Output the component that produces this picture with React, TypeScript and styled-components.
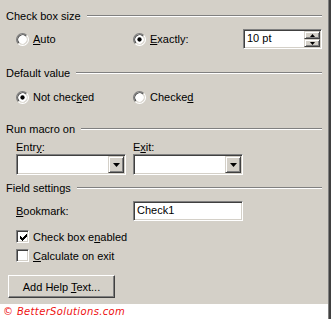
import React from "react";
import styled, { createGlobalStyle } from "styled-components";

const GlobalStyle = createGlobalStyle`
  html, body {
    margin: 0;
    padding: 0;
    background: #ffffff;
  }
  body {
    font-family: "Liberation Sans", Arial, sans-serif;
    font-size: 11px;
    color: #000000;
  }
`;

const FACE = "#d4d0c8";
const SHADOW = "#808080";
const DARK = "#404040";

const Frame = styled.div`
  display: flex;
  width: 331px;
  height: 319px;
  overflow: hidden;
`;

const Main = styled.div`
  flex: 1;
  display: flex;
  flex-direction: column;
`;

const Edge = styled.div`
  width: 3px;
  box-sizing: border-box;
  border-left: 1px solid ${SHADOW};
  background: ${DARK};
`;

const Panel = styled.div`
  height: 304px;
  box-sizing: border-box;
  padding: 9px 6px 0 6px;
  background: ${FACE};
  display: flex;
  flex-direction: column;
`;

const Watermark = styled.div`
  flex: 1;
  display: flex;
  align-items: center;
  padding-left: 3px;
  background: #ffffff;
  color: #ee1111;
  font-family: "DejaVu Sans", Verdana, sans-serif;
  font-style: italic;
  font-size: 10px;
  letter-spacing: 0.35px;
`;

const Legend = styled.div<{ $top?: number }>`
  display: flex;
  align-items: center;
  gap: 6px;
  height: 14px;
  line-height: 14px;
  margin-top: ${(p) => p.$top ?? 0}px;
  white-space: nowrap;
`;

const Rule = styled.div`
  flex: 1;
  height: 0;
  border-top: 1px solid ${SHADOW};
  border-bottom: 1px solid #ffffff;
`;

const Grid = styled.div<{ $top: number; $rows?: string }>`
  display: grid;
  grid-template-columns: 117px 110px 79px;
  grid-template-rows: ${(p) => p.$rows ?? "auto"};
  align-items: center;
  margin: ${(p) => p.$top}px 0 0 10px;
`;

const Option = styled.label`
  display: flex;
  align-items: center;
  gap: 4px;
  height: 14px;
  line-height: 14px;
  white-space: nowrap;
`;

const FieldLabel = styled.div`
  height: 14px;
  line-height: 14px;
  white-space: nowrap;
`;

const Sunken = styled.div<{ $w: number; $h: number }>`
  width: ${(p) => p.$w}px;
  height: ${(p) => p.$h}px;
  box-sizing: border-box;
  display: flex;
  align-items: stretch;
  background: #ffffff;
  border: 1px solid;
  border-color: ${SHADOW} #ffffff #ffffff ${SHADOW};
  box-shadow: inset 1px 1px 0 ${DARK}, inset -1px -1px 0 ${FACE};
  padding: 1px;
`;

const FieldText = styled.div`
  flex: 1;
  padding-left: 2px;
  line-height: 15px;
  white-space: nowrap;
`;

const Raised = styled.div`
  box-sizing: border-box;
  background: ${FACE};
  border: 1px solid;
  border-color: ${FACE} ${DARK} ${DARK} ${FACE};
  box-shadow: inset 1px 1px 0 #ffffff, inset -1px -1px 0 ${SHADOW};
  display: flex;
  align-items: center;
  justify-content: center;
`;

const DropButton = styled(Raised)`
  width: 16px;
`;

const SpinColumn = styled.div`
  width: 16px;
  display: flex;
  flex-direction: column;
`;

const SpinButton = styled(Raised)`
  flex: 1;
`;

const Check = styled.div<{ $top: number }>`
  display: flex;
  align-items: center;
  gap: 4px;
  height: 13px;
  margin: ${(p) => p.$top}px 0 0 10px;
  white-space: nowrap;
`;

const CheckBox = styled.div`
  width: 13px;
  height: 13px;
  box-sizing: border-box;
  background: #ffffff;
  border: 1px solid;
  border-color: ${SHADOW} #ffffff #ffffff ${SHADOW};
  box-shadow: inset 1px 1px 0 ${DARK}, inset -1px -1px 0 ${FACE};
  position: relative;
`;

const Tick = styled.svg`
  position: absolute;
  left: 2px;
  top: 2px;
`;

const PushButton = styled(Raised)`
  width: 107px;
  height: 23px;
  margin: 13px 0 0 2px;
  border-color: #ffffff ${DARK} ${DARK} #ffffff;
  box-shadow: inset -1px -1px 0 ${SHADOW};
  white-space: nowrap;
  font-size: 11px;
`;

const Radio: React.FC<{ checked?: boolean }> = ({ checked }) => (
  <svg width="13" height="13" viewBox="0 0 12 12" style={{ flex: "none" }}>
    <circle cx="6" cy="6" r="5" fill="#ffffff" />
    <path d="M2.11 9.89 A5.5 5.5 0 0 1 9.89 2.11" fill="none" stroke={SHADOW} strokeWidth="1" />
    <path d="M9.89 2.11 A5.5 5.5 0 0 1 2.11 9.89" fill="none" stroke="#ffffff" strokeWidth="1" />
    <path d="M2.82 9.18 A4.5 4.5 0 0 1 9.18 2.82" fill="none" stroke={DARK} strokeWidth="1" />
    <path d="M9.18 2.82 A4.5 4.5 0 0 1 2.82 9.18" fill="none" stroke={FACE} strokeWidth="1" />
    {checked && <circle cx="6" cy="6" r="2" fill="#000000" />}
  </svg>
);

const tickRows: [number, number][][] = [
  [[6, 1]],
  [[5, 2]],
  [[0, 1], [4, 3]],
  [[0, 2], [3, 3]],
  [[0, 5]],
  [[1, 3]],
  [[2, 1]],
];

const CheckMark = () => (
  <Tick width="9" height="9" viewBox="0 0 9 9" shapeRendering="crispEdges">
    {tickRows.map((row, y) =>
      row.map(([x, w]) => <rect key={`${y}-${x}`} x={x + 1} y={y + 1} width={w} height="1" fill="#000" />)
    )}
  </Tick>
);

const Arrow: React.FC<{ dir: "up" | "down"; size?: number }> = ({ dir, size = 7 }) => {
  const h = Math.ceil(size / 2);
  const pts =
    dir === "down" ? `0,0 ${size},0 ${size / 2},${h}` : `0,${h} ${size},${h} ${size / 2},0`;
  return (
    <svg width={size} height={h} viewBox={`0 0 ${size} ${h}`}>
      <polygon points={pts} fill="#000" />
    </svg>
  );
};

const Combo = () => (
  <Sunken $w={110} $h={21}>
    <FieldText />
    <DropButton>
      <Arrow dir="down" />
    </DropButton>
  </Sunken>
);

export default function App() {
  return (
    <>
      <GlobalStyle />
      <Frame>
        <Main>
          <Panel>
            <Legend>
              Check box size
              <Rule />
            </Legend>
            <Grid $top={6}>
              <Option>
                <Radio />
                <span>
                  <u>A</u>uto
                </span>
              </Option>
              <Option>
                <Radio checked />
                <span>
                  <u>E</u>xactly:
                </span>
              </Option>
              <Sunken $w={79} $h={20}>
                <FieldText>10 pt</FieldText>
                <SpinColumn>
                  <SpinButton>
                    <Arrow dir="up" size={5} />
                  </SpinButton>
                  <SpinButton>
                    <Arrow dir="down" size={5} />
                  </SpinButton>
                </SpinColumn>
              </Sunken>
            </Grid>

            <Legend $top={17}>
              Default value
              <Rule />
            </Legend>
            <Grid $top={10}>
              <Option>
                <Radio checked />
                <span>
                  Not chec<u>k</u>ed
                </span>
              </Option>
              <Option>
                <Radio />
                <span>
                  Checke<u>d</u>
                </span>
              </Option>
            </Grid>

            <Legend $top={18}>
              Run macro on
              <Rule />
            </Legend>
            <Grid $top={4} $rows="14px 21px">
              <FieldLabel>
                Entr<u>y</u>:
              </FieldLabel>
              <FieldLabel>
                E<u>x</u>it:
              </FieldLabel>
              <div />
              <Combo />
              <Combo />
            </Grid>

            <Legend $top={6}>
              Field settings
              <Rule />
            </Legend>
            <Grid $top={6}>
              <FieldLabel>
                <u>B</u>ookmark:
              </FieldLabel>
              <Sunken $w={110} $h={20}>
                <FieldText>Check1</FieldText>
              </Sunken>
            </Grid>

            <Check $top={9}>
              <CheckBox>
                <CheckMark />
              </CheckBox>
              <span>
                Check box e<u>n</u>abled
              </span>
            </Check>
            <Check $top={6}>
              <CheckBox />
              <span>
                <u>C</u>alculate on exit
              </span>
            </Check>

            <PushButton>
              <span>
                Add Help <u>T</u>ext...
              </span>
            </PushButton>
          </Panel>
          <Watermark>© BetterSolutions.com</Watermark>
        </Main>
        <Edge />
      </Frame>
    </>
  );
}
